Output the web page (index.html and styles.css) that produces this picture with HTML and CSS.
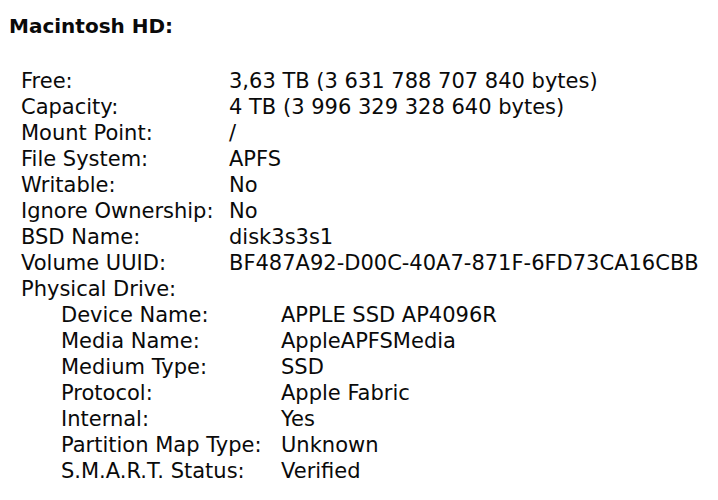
FILE: index.html
```html
<!DOCTYPE html>
<html>
<head>
<meta charset="utf-8">
<link rel="stylesheet" href="styles.css">
</head>
<body>
<div class="page">
  <h1 class="title">Macintosh HD:</h1>
  <div class="props">
    <div class="label">Free:</div><div class="value">3,63 TB (3 631 788 707 840 bytes)</div>
    <div class="label">Capacity:</div><div class="value">4 TB (3 996 329 328 640 bytes)</div>
    <div class="label">Mount Point:</div><div class="value">/</div>
    <div class="label">File System:</div><div class="value">APFS</div>
    <div class="label">Writable:</div><div class="value">No</div>
    <div class="label">Ignore Ownership:</div><div class="value">No</div>
    <div class="label">BSD Name:</div><div class="value">disk3s3s1</div>
    <div class="label">Volume UUID:</div><div class="value">BF487A92-D00C-40A7-871F-6FD73CA16CBB</div>
    <div class="label full">Physical Drive:</div>
    <div class="props nested">
      <div class="label">Device Name:</div><div class="value">APPLE SSD AP4096R</div>
      <div class="label">Media Name:</div><div class="value">AppleAPFSMedia</div>
      <div class="label">Medium Type:</div><div class="value">SSD</div>
      <div class="label">Protocol:</div><div class="value">Apple Fabric</div>
      <div class="label">Internal:</div><div class="value">Yes</div>
      <div class="label">Partition Map Type:</div><div class="value">Unknown</div>
      <div class="label">S.M.A.R.T. Status:</div><div class="value">Verified</div>
    </div>
  </div>
</div>
</body>
</html>
```
FILE: styles.css
```css
html, body {
  margin: 0;
  padding: 0;
  background: #ffffff;
}
.page {
  font-family: "DejaVu Sans", "Liberation Sans", sans-serif;
  color: #0a0a0a;
  padding: 13px 0 0 9px;
}
.title {
  margin: 0;
  font-size: 20px;
  font-weight: bold;
  line-height: 26px;
}
.props {
  display: grid;
  grid-template-columns: 208px 1fr;
  font-size: 21px;
  line-height: 26px;
  margin: 29px 0 0 12px;
}
.props.nested {
  grid-column: 1 / -1;
  grid-template-columns: 220px 1fr;
  margin: 0 0 0 40px;
}
.label, .value {
  white-space: nowrap;
}
.full {
  grid-column: 1 / -1;
}
```
